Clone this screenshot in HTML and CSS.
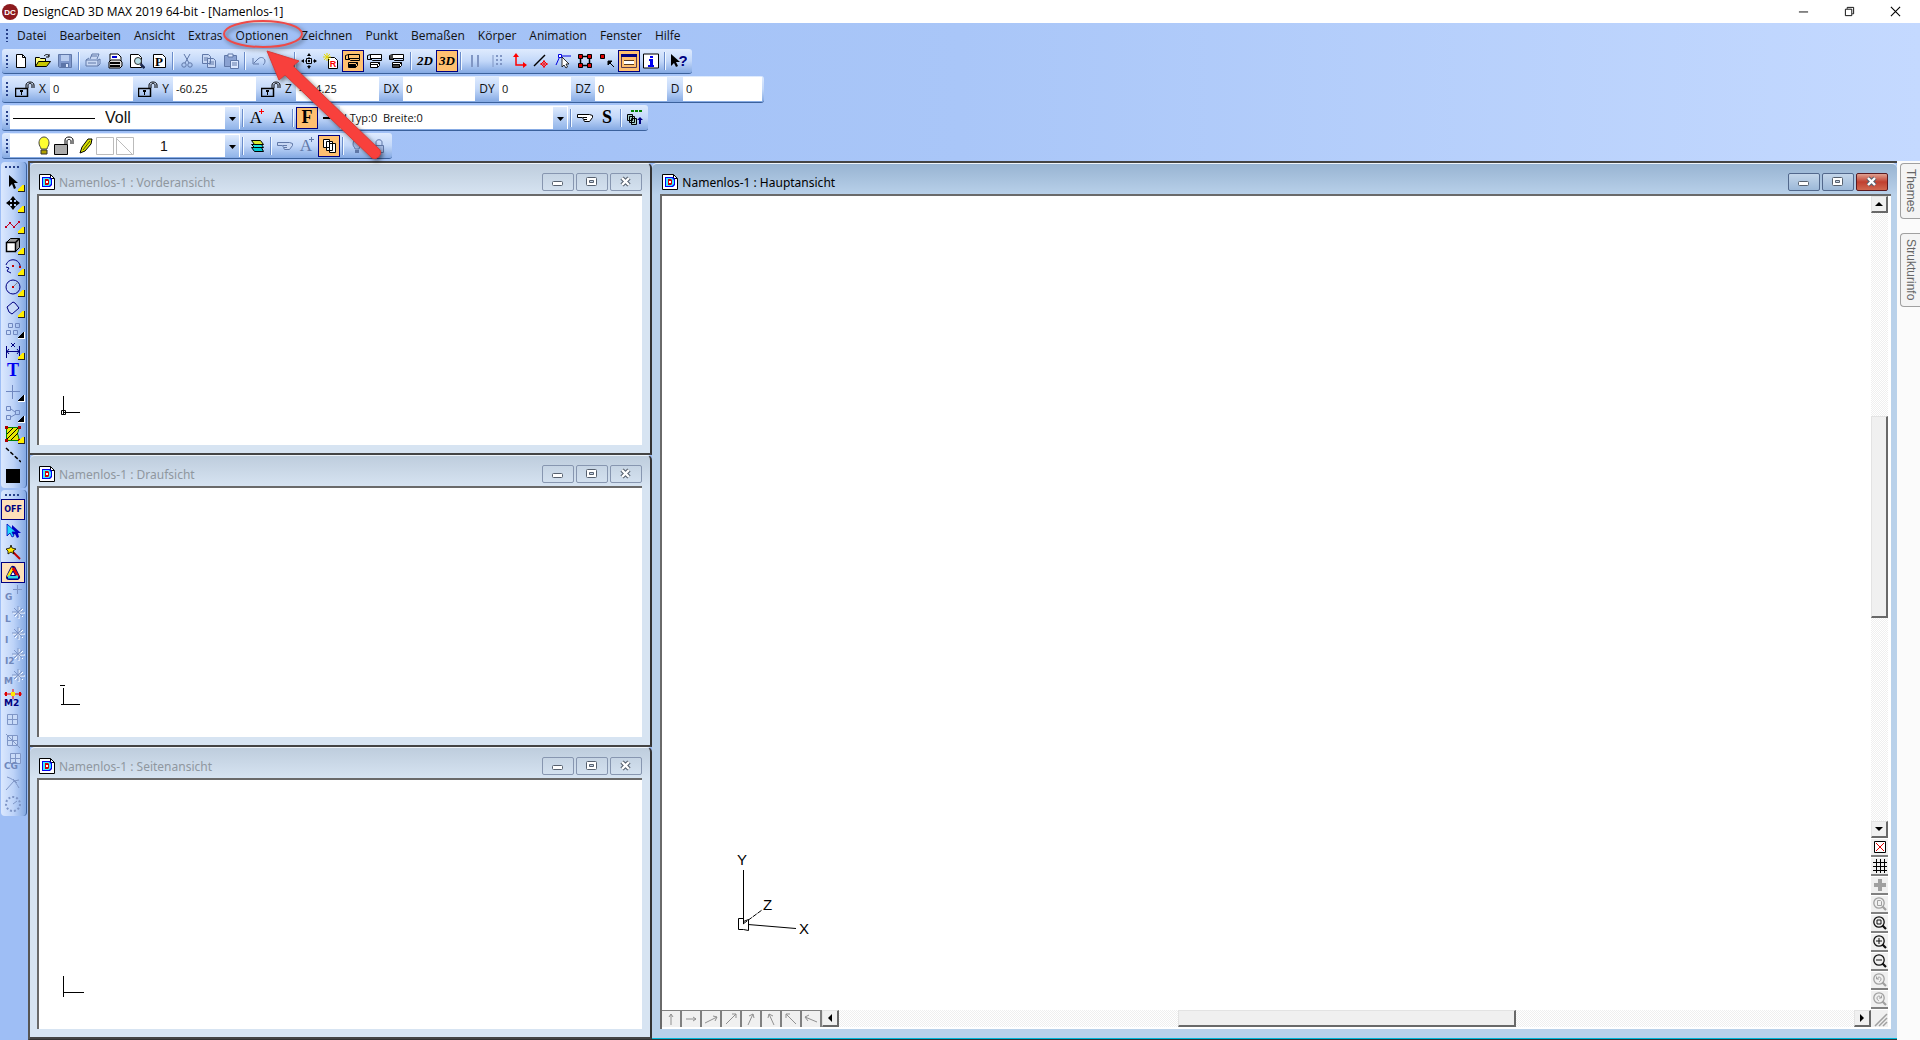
FILE: index.html
```html
<!DOCTYPE html>
<html lang="de">
<head>
<meta charset="utf-8">
<title>DesignCAD 3D MAX 2019 64-bit - [Namenlos-1]</title>
<link rel="stylesheet" href="styles.css">
</head>
<body>
<svg class="defs" aria-hidden="true">
  <symbol id="i-doc" viewBox="0 0 16 16"><path d="M.5.5h11l4 4v11H.5z" fill="#fff" stroke="#000"/><path d="M11.500 .5v4h4" fill="none" stroke="#000"/><path d="M3 3h8l2 2v6l-2 2H3z" fill="#0000f0"/><path d="M4 4h6l2 2v4l-2 2H4z" fill="#40e8ff"/><path d="M6 5h3l1 1v4l-1 1H6z" fill="#d00000"/><path d="M7 7h2v2H7z" fill="#fff"/></symbol>
  <symbol id="i-min" viewBox="0 0 12 12"><rect x=".5" y="5.500" width="10" height="4" rx="1" fill="#fff" stroke="#56606e"/></symbol>
  <symbol id="i-max" viewBox="0 0 12 12"><rect x=".5" y="1.500" width="10" height="8" rx="1" fill="#fff" stroke="#56606e"/><path d="M3.500 4.500h4v2h-4z" fill="#c4d2e4" stroke="#56606e"/></symbol>
  <symbol id="i-x" viewBox="0 0 12 12"><path d="M2 2l7 7M9 2L2 9" stroke="#56606e" stroke-width="4.500"/><path d="M2 2l7 7M9 2L2 9" stroke="#fff" stroke-width="2.400"/></symbol>
  <symbol id="i-lock" viewBox="0 0 20 16"><path d="M.5 7.500h12v8H.5z" fill="none" stroke="#000" stroke-width="1.500"/><path d="M11 7V4c0-4 8-4 8 0v3M13 7V4c0-2 4-2 4 0v3" fill="none" stroke="#000"/><path d="M5 9h3v2H7v3H6v-3H5z"/></symbol>
  <symbol id="i-plot" viewBox="0 0 16 16"><path d="M3.500 1.500h11v4h-11z" fill="none" stroke="#000"/><path d="M.5 2.500l3-1v4l2 2h9v-2M.5 2.500v4h4" fill="none" stroke="#000"/><path d="M3.500 9.500h9v3l-2 2h-7zM3.500 11.500h7l2-2M10.500 11.500v3" fill="none" stroke="#000"/></symbol>
  <symbol id="i-ray" viewBox="0 0 24 20"><path d="M17 1v12M11 7h12M13 3l8 8M21 3l-8 8" stroke="#fff" transform="translate(1 1)"/><path d="M17 1v12M11 7h12M13 3l8 8M21 3l-8 8" stroke="#7f96c6"/></symbol>
  <symbol id="i-mag" viewBox="0 0 14 14"><circle cx="6" cy="6" r="5.200" fill="none" stroke="currentColor" stroke-width="1.300"/><path d="M9.500 9.500l3.500 3.500" stroke="currentColor" stroke-width="2.200"/></symbol>
</svg>

<header class="titlebar">
  <svg class="logo" viewBox="0 0 16 16" aria-hidden="true"><circle cx="8" cy="8" r="8" fill="#8d1a1e"/><text x="8" y="11" text-anchor="middle" class="logo-text">DC</text></svg>
  <h1>DesignCAD 3D MAX 2019 64-bit - [Namenlos-1]</h1>
  <div class="winctl">
    <button aria-label="Minimieren"><svg viewBox="0 0 12 12"><path d="M1 6.500h10" stroke="#000"/></svg></button>
    <button aria-label="Wiederherstellen"><svg viewBox="0 0 12 12"><path d="M1.500 3.500h7v7h-7zM3.500 3V1.500h7v7H9" fill="none" stroke="#000"/></svg></button>
    <button aria-label="Schließen"><svg viewBox="0 0 12 12"><path d="M1 1l10 10M11 1L1 11" stroke="#000" stroke-width="1.200"/></svg></button>
  </div>
</header>

<div class="bars">
  <nav class="menu grip">
    <button>Datei</button><button>Bearbeiten</button><button>Ansicht</button><button>Extras</button><button>Optionen</button><button>Zeichnen</button><button>Punkt</button><button>Bemaßen</button><button>Körper</button><button>Animation</button><button>Fenster</button><button>Hilfe</button>
  </nav>

  <div class="bar grip">
    <button class="tb" aria-label="Neu"><svg viewBox="0 0 16 16"><path d="M3.500 1.500h6l3 3v10h-9z" fill="#fff" stroke="#000"/><path d="M9.500 1.500v3h3" fill="none" stroke="#000"/></svg></button>
    <button class="tb" aria-label="Öffnen"><svg viewBox="0 0 16 16"><path d="M.5 13.500v-9h4l1 1h5v3" fill="#ffff80" stroke="#000"/><path d="M.5 13.500l3-5h12l-4 5z" fill="#c8c800" stroke="#000"/><path d="M9 3c2-2 4-2 5 0m0-2v3h-3" fill="none" stroke="#000"/></svg></button>
    <button class="tb" aria-label="Speichern"><svg viewBox="0 0 16 16"><path d="M1.500 1.500h13v13h-12l-1-1z" fill="#8099cc" stroke="#6078a8"/><path d="M4 2h8v6H4z" fill="#b9cdf0"/><path d="M4 10h8v4H4z" fill="#5c75a8"/><path d="M9 11h2v3H9z" fill="#dce8ff"/></svg></button>
    <i class="sep"></i>
    <button class="tb" aria-label="Drucken"><svg viewBox="0 0 16 16"><path d="M5 6l2-5h7l-2 5M1 7h12v6H1zM1 7l3-2M13 7l2-1v5l-2 2M3 10h8M6 3h6" fill="#c8d8f4" stroke="#6078a8"/></svg></button>
    <button class="tb" aria-label="Druckoptionen"><svg viewBox="0 0 16 16"><path d="M3 1h8l3 3v10H3z" fill="#fff" stroke="#000"/><path d="M5 4h5" stroke="#0000d0" stroke-width="2"/><path d="M4 7h9l2 2v4l-2 2H2V9z" fill="#ddd" stroke="#000"/><path d="M3 10h10M3 13h10" stroke="#000" stroke-width="2"/></svg></button>
    <button class="tb" aria-label="Seitenansicht"><svg viewBox="0 0 16 16"><path d="M1.500 1.500h8l3 3v10h-11z" fill="#fff" stroke="#000"/><circle cx="9" cy="8" r="3.500" fill="#b8e0e8" stroke="#333"/><path d="M11.500 11l4 4" stroke="#1d2a50" stroke-width="2.500"/></svg></button>
    <button class="tb" aria-label="Plotten"><svg viewBox="0 0 16 16"><path d="M2.500 1.500h9l3 3v10h-12z" fill="#fff" stroke="#000"/><text x="8" y="13" text-anchor="middle" class="t-serif">P</text></svg></button>
    <i class="sep"></i>
    <button class="tb" aria-label="Ausschneiden"><svg viewBox="0 0 16 16"><path d="M5 1l5 9M11 1L6 10" stroke="#6078a8" fill="none"/><circle cx="5" cy="12" r="2.200" fill="none" stroke="#6078a8"/><circle cx="11" cy="12" r="2.200" fill="none" stroke="#6078a8"/></svg></button>
    <button class="tb" aria-label="Kopieren"><svg viewBox="0 0 16 16"><path d="M1.500 1.500h6l2 2v7h-8zM6.500 5.500h6l2 2v7h-8zM3 5h4M3 7h3M8 9h5M8 11h5" fill="#c8d8f4" stroke="#6078a8"/></svg></button>
    <button class="tb" aria-label="Einfügen"><svg viewBox="0 0 16 16"><path d="M1.500 2.500h12v11h-12z" fill="#8aa2d2" stroke="#6078a8"/><path d="M5 1h5v3H5z" fill="#dce8ff" stroke="#6078a8"/><path d="M7.500 7.500h8v8h-8zM9 10h5M9 12h5" fill="#dce8ff" stroke="#6078a8"/></svg></button>
    <i class="sep"></i>
    <button class="tb" aria-label="Rückgängig"><svg viewBox="0 0 16 16"><path d="M2 5v6h6M3 10l4-4c3-3 7-1 7 2 0 2-1 3-2 4" fill="none" stroke="#6078a8"/></svg></button>
    <button class="tb" aria-label="Wiederholen"><svg viewBox="0 0 16 16"><path d="M14 5v6H8M13 10L9 6C6 3 2 5 2 8c0 2 1 3 2 4" fill="none" stroke="#6078a8"/></svg></button>
    <i class="sep"></i>
    <button class="tb" aria-label="Schwenken"><svg viewBox="0 0 16 16"><path d="M8 0l2 3H6zM8 16l2-3H6zM0 8l3-2v4zM16 8l-3-2v4z"/><path d="M8 2v12M2 8h12" stroke="#000" stroke-dasharray="1 1"/><path d="M5.500 5.500h5v5h-5z" fill="#cfe0fc" stroke="#000"/><circle cx="8" cy="8" r="1.200"/></svg></button>
    <button class="tb" aria-label="Regenerieren"><svg viewBox="0 0 16 16"><path d="M5.500 4.500h6l3 3v8h-9z" fill="#fff" stroke="#000"/><path d="M4 0v8M0 4h8M1 1l6 6M7 1L1 7" stroke="#e8d800"/><text x="10" y="14" text-anchor="middle" class="t-red">R</text></svg></button>
    <button class="tb on" aria-label="Ansicht 1"><svg viewBox="0 0 16 16"><path d="M3 12h8v2H3z"/><use href="#i-plot"/></svg></button>
    <button class="tb" aria-label="Ansicht 2"><svg viewBox="0 0 16 16"><path d="M3 1h11v5H3zM3 9h9v5H3z" fill="#fff"/><use href="#i-plot"/></svg></button>
    <button class="tb" aria-label="Ansicht 3"><svg viewBox="0 0 16 16"><path d="M3 1h11v5H3zM3 9h9v5H3z" fill="#fff"/><use href="#i-plot"/><path d="M1 2h3v4H1zM4 12h6v2H4z" fill="#444"/></svg></button>
    <i class="sep"></i>
    <button class="tb dim">2D</button>
    <button class="tb dim on">3D</button>
    <i class="sep"></i>
    <button class="tb" aria-label="Parallel"><svg viewBox="0 0 16 16"><path d="M5 2v12M11 2v12" stroke="#8096c4" stroke-width="2"/></svg></button>
    <button class="tb" aria-label="Raster"><svg viewBox="0 0 16 16"><path d="M4 2v12" stroke="#8096c4"/><path d="M8 2v12M12 2v12" stroke="#8096c4" stroke-width="2" stroke-dasharray="2 2"/></svg></button>
    <button class="tb" aria-label="Koordinaten"><svg viewBox="0 0 16 16"><path d="M5 3v9h9" fill="none" stroke="#f00" stroke-width="1.500"/><path d="M5 0l3 4H2zM16 12l-4-3v6z" fill="#f00"/></svg></button>
    <button class="tb" aria-label="Linienfang"><svg viewBox="0 0 16 16"><path d="M1 13L12 2" stroke="#000" stroke-width="1.500"/><path d="M11 7v8M7 11h8" stroke="#f00"/><path d="M11 8l3 3-3 3-3-3z" fill="none" stroke="#f00"/></svg></button>
    <button class="tb" aria-label="Auswahl"><svg viewBox="0 0 16 16"><path d="M1 12L5 3h11" fill="none" stroke="#0000e0"/><path d="M3.500 1.500h3v3h-3z" fill="#fff" stroke="#0000e0"/><path d="M7 4v10l2-2 2 3 1.500-1-1.500-3h3z" fill="#fff" stroke="#000" stroke-width=".8"/></svg></button>
    <button class="tb" aria-label="Griffe"><svg viewBox="0 0 16 16"><path d="M3.500 3.500h9v9h-9z" fill="none" stroke="#000" stroke-width="1.500"/><path d="M1.500 1.500h4v4h-4zM10.500 1.500h4v4h-4zM1.500 10.500h4v4h-4zM10.500 10.500h4v4h-4z" fill="#e00000" stroke="#000"/></svg></button>
    <button class="tb" aria-label="Punkt wählen"><svg viewBox="0 0 16 16"><path d="M1.500 1.500h4v4h-4z" fill="#e00000" stroke="#000"/><path d="M9 8h4l-4 4zM10 9l5 5" stroke="#000"/></svg></button>
    <button class="tb on" aria-label="Infofeld"><svg viewBox="0 0 16 16"><path d="M.5 1.500h15v13H.5z" fill="#ffc070" stroke="#5a3a50"/><path d="M0 1h16v3H0z" fill="#000080"/><path d="M3 7.500h10v4H3z" fill="#fff"/><path d="M3 7.500h10M3 11.500h10" stroke="#5a3a20"/></svg></button>
    <button class="tb" aria-label="Info"><svg viewBox="0 0 16 16"><path d="M.5 1h15v14H.5z" fill="#fff" stroke="#000"/><path d="M7 3h3v2H7zM6 6h4v6h1v2H5v-2h2V8H6z" fill="#0000f0"/></svg></button>
    <i class="sep"></i>
    <button class="tb" aria-label="Kontexthilfe"><svg viewBox="0 0 16 16"><path d="M0 1v12l3-3 2 4 2-1-2-4h4z"/><text x="12" y="13" text-anchor="middle" class="t-help">?</text></svg></button>
  </div>

  <form class="bar coords grip">
    <button type="button" class="lock" aria-label="X sperren"><svg><use href="#i-lock"/></svg></button><label for="cx">X</label><input id="cx" class="wide" value="0">
    <button type="button" class="lock" aria-label="Y sperren"><svg><use href="#i-lock"/></svg></button><label for="cy">Y</label><input id="cy" class="wide" value="-60.25">
    <button type="button" class="lock" aria-label="Z sperren"><svg><use href="#i-lock"/></svg></button><label for="cz">Z</label><input id="cz" class="wide" value="-114.25">
    <label class="d" for="dx">DX</label><input id="dx" value="0">
    <label class="d" for="dy">DY</label><input id="dy" value="0">
    <label class="d" for="dz">DZ</label><input id="dz" value="0">
    <label class="d1" for="dd">D</label><input id="dd" class="last" value="0">
  </form>

  <div class="bar tall grip">
    <div class="combo style">
      <svg class="line" viewBox="0 0 82 2" aria-hidden="true"><path d="M0 1.500h82" stroke="#000"/></svg>
      <select aria-label="Linienart"><option>Voll</option></select><svg class="drop" viewBox="0 0 14 22" aria-hidden="true"><path d="M4 10h7l-3.500 4z"/></svg>
    </div>
    <i class="sep"></i>
    <button class="tb" aria-label="Textstil neu"><svg class="big" viewBox="0 0 20 20"><text x="9" y="15" text-anchor="middle" class="t-a">A</text><path d="M14.500 1v5M12 3.500h5" stroke="#f00"/></svg></button>
    <button class="tb" aria-label="Textstil"><svg class="big" viewBox="0 0 20 20"><text x="10" y="15" text-anchor="middle" class="t-a">A</text></svg></button>
    <i class="sep"></i>
    <button class="tb on bold">F</button>
    <button class="tb" aria-label="Linie"><svg viewBox="0 0 16 16"><path d="M2 8h12" stroke="#000" stroke-width="2"/></svg></button>
    <div class="combo type">
      <select aria-label="Linientyp"><option>LTyp:0&nbsp; Breite:0</option></select><svg class="drop" viewBox="0 0 14 22" aria-hidden="true"><path d="M4 10h7l-3.500 4z"/></svg>
    </div>
    <i class="sep"></i>
    <button class="tb" aria-label="Übernehmen"><svg viewBox="0 0 16 16"><path d="M.5 4.500h12l3 1v2l-3 4H7.500l-1-2-1-2h-5z" fill="#fff" stroke="#000"/><path d="M6 7.500h4M7 9.500h3" stroke="#000"/></svg></button>
    <button class="tb bold">S</button>
    <i class="sep"></i>
    <button class="tb" aria-label="Gruppe"><svg viewBox="0 0 16 16"><path d="M4 1h12" stroke="#008000" stroke-width="2" stroke-dasharray="3 1"/><path d="M.5 4.500h5v6h-5zM2.500 6.500h5v6h-5zM4.500 8.500h5v6h-5z" fill="#a8d0c8" stroke="#000"/><path d="M13 7l3 3h-2v4h-2v-4h-2z" fill="#000080"/></svg></button>
  </div>

  <div class="bar tall grip">
    <div class="combo layer">
      <svg class="states" viewBox="0 0 98 20" aria-hidden="true">
        <path d="M3 7c0-8 10-8 10 0 0 3-2 4-2 6H5c0-2-2-3-2-6z" fill="#ffff30" stroke="#444"/><path d="M5 14h6v4H5z" fill="#b0a000" stroke="#333"/>
        <path d="M18.500 8.500h13v10h-13z" fill="#aaa" stroke="#000"/><path d="M29 8V4c0-4 8-4 8 0v4M31 8V5c0-2 4-2 4 0v3" fill="none" stroke="#000"/>
        <path d="M44 17l2-6 6-8h4l-1 5-6 7z" fill="#d8e000" stroke="#000"/><path d="M47 14l7-9" stroke="#505000"/>
        <path d="M60.500 1.500h17v17h-17zM80.500 1.500h17v17h-17zM81 3l15 15" fill="none" stroke="#bbb"/>
      </svg>
      <select aria-label="Ebene"><option>1</option></select><svg class="drop" viewBox="0 0 14 22" aria-hidden="true"><path d="M4 10h7l-3.500 4z"/></svg>
    </div>
    <i class="sep"></i>
    <button class="tb" aria-label="Ebenen"><svg viewBox="0 0 16 16"><path d="M2.500 9.500h10l2 4h-9z" fill="#00c8d0" stroke="#000"/><path d="M2.500 6.500h10l2 3h-9z" fill="#20e0e0" stroke="#000"/><path d="M2.500 2.500h9l3 4h-9z" fill="#d8e830" stroke="#000"/></svg></button>
    <i class="sep"></i>
    <button class="tb" aria-label="Ebene übernehmen"><svg viewBox="0 0 16 16"><path d="M.5 4.500h12l3 1v2l-3 4H7.500l-1-2-1-2h-5z" fill="#c8d8f4" stroke="#6078a8"/><path d="M6 7.500h4M7 9.500h3" stroke="#6078a8"/></svg></button>
    <button class="tb faint" aria-label="Textebene"><svg class="big" viewBox="0 0 20 20"><text x="9" y="15" text-anchor="middle" class="t-a">A</text><path d="M14.500 1v5M12 3.500h5" stroke="#6078a8"/></svg></button>
    <button class="tb on" aria-label="Alle Ebenen"><svg viewBox="0 0 16 16"><path d="M2.500 1.500h6v8h-6zM5.500 3.500h6v9h-6zM8.500 5.500h6v9h-6z" fill="#fff" stroke="#000"/></svg></button>
    <i class="sep"></i>
    <button class="tb" aria-label="Sichtbar"><svg viewBox="0 0 16 16"><path d="M4 6c0-6 8-6 8 0 0 3-2 3-2 5H6c0-2-2-2-2-5z" fill="#a9bde6" stroke="#6078a8"/><path d="M6 12h4v3H6z" fill="#6078a8"/></svg></button>
    <button class="tb" aria-label="Gesperrt"><svg viewBox="0 0 16 16"><path d="M3.500 7.500h9v7h-9z" fill="#a9bde6" stroke="#6078a8"/><path d="M5 7V4c0-3 6-3 6 0v3" fill="none" stroke="#6078a8"/></svg></button>
  </div>
</div>

<div class="work">
  <aside class="tools">
    <div class="dock">
      <button class="more" aria-label="Auswählen"><svg viewBox="0 0 16 16"><path d="M4 1v12l3-3 2 5 2-1-2-5h4z"/></svg></button>
      <button class="more" aria-label="Verschieben"><svg viewBox="0 0 16 16"><path d="M8 1l3 4H5zM8 15l3-4H5zM1 8l4-3v6zM15 8l-4-3v6z"/><path d="M8 3v10M3 8h10" stroke="#000" stroke-width="2"/></svg></button>
      <button class="more" aria-label="Linie"><svg viewBox="0 0 16 16"><path d="M1 11l4-4 4 4 5-5" fill="none" stroke="#c00020"/><path d="M0 10h2v2H0zM4 6h2v2H4zM8 10h2v2H8zM13 5h2v2h-2z" fill="#c00020"/></svg></button>
      <button class="more" aria-label="Quader"><svg viewBox="0 0 16 16"><path d="M1.500 5.500l4-4h9v9l-4 4" fill="#999" stroke="#000"/><path d="M10.500 5.500l4-4M1.500 5.500h9v9h-9z" fill="#fff" stroke="#000" stroke-width="1.500"/></svg></button>
      <button class="more" aria-label="Bogen"><svg viewBox="0 0 16 16"><path d="M1 7c2-7 12-7 14 0v3M1 9l3 1-2 3 4 2" fill="none" stroke="#000080"/><path d="M7 7h2v2H7zM14 8h2v2h-2z" fill="#c00000"/></svg></button>
      <button class="more" aria-label="Kreis"><svg viewBox="0 0 16 16"><circle cx="8" cy="8" r="7" fill="none" stroke="#000080"/><path d="M8 8l5-5" stroke="#888"/><path d="M7 7h2v2H7z" fill="#c00000"/></svg></button>
      <button class="more" aria-label="Fläche"><svg viewBox="0 0 16 16"><path d="M2 7l6-5 2 1 4 5-7 6-3-2z" fill="#c9dbf8" stroke="#000080"/></svg></button>
      <button class="more off" aria-label="Anordnung"><svg viewBox="0 0 16 16"><path d="M3.500 2.500h4v4h-4zM10.500 2.500h4v4h-4zM1.500 9.500h4v4h-4zM8.500 9.500h4v4h-4z" fill="none" stroke="#7088c0"/></svg></button>
      <button class="more" aria-label="Bemaßung"><svg viewBox="0 0 16 16"><path d="M1.500 4v12M14.500 4v12M1 9.500h14M4 7L2 9.500l2 2.500M12 7l2 2.500-2 2.500M6 1l4 4M10 1L6 5" fill="none" stroke="#000080"/></svg></button>
      <button class="text-tool">T</button>
      <button class="more off" aria-label="Punkt"><svg viewBox="0 0 16 16"><path d="M7.500 1v14M1 7.500h14" stroke="#7088c0"/></svg></button>
      <button class="more off" aria-label="Struktur"><svg viewBox="0 0 16 16"><path d="M1.500 1.500h4v4h-4zM1.500 10.500h4v4h-4zM10.500 5.500h4v4h-4zM6 4l4 3M6 12l5-3" fill="none" stroke="#7088c0"/></svg></button>
      <button class="more" aria-label="Schraffur"><svg viewBox="0 0 16 16"><path d="M1.500 1.500h13l-2 6 2 7h-13z" fill="#e8e800" stroke="#008000"/><path d="M2 8l6-6M2 13L13 2M6 14l7-7" stroke="#000"/><path d="M0 0h3v3H0zM13 0h3v3h-3zM0 13h3v3H0zM13 13h3v3h-3z" fill="#b00000"/></svg></button>
      <button aria-label="Strichlinie"><svg viewBox="0 0 16 16"><path d="M1 1l15 14" stroke="#000" stroke-width="1.500" stroke-dasharray="4 2"/></svg></button>
      <button aria-label="Farbe"><svg viewBox="0 0 16 16"><path d="M1 1h14v14H1z"/></svg></button>
    </div>
    <div class="dock">
      <button class="on off-label">OFF</button>
      <button aria-label="Zeiger"><svg viewBox="0 0 16 16"><path d="M7 2v11l3-2 2 4 2-1-1-4h3z" fill="#0000c0"/><path d="M2 1v12l3-3 2 4 2-1-2-4h4z" fill="#20d8f8" stroke="#0000c0" stroke-width=".8"/></svg></button>
      <button aria-label="Zauberstab"><svg viewBox="0 0 16 16"><path d="M7 7l8 8" stroke="#c00000" stroke-width="2"/><path d="M6 1l1 3 4 1-3 2 1 3-3-2-3 2V7L1 5l4-1z" fill="#ffe800" stroke="#000" stroke-width=".8"/></svg></button>
      <button class="on" aria-label="Dreieck"><svg viewBox="0 0 16 16"><path d="M8 4l4 8H4z" fill="none" stroke="#000080" stroke-width="6" stroke-linejoin="round"/><path d="M8 3l-5 9" stroke="#ffe800" stroke-width="3"/><path d="M8 3l5 9" stroke="#e00000" stroke-width="3"/><path d="M3 12h10" stroke="#30d8e8" stroke-width="3"/><path d="M8 6l2.500 4.500h-5z" fill="#fff" stroke="#000080"/></svg></button>
      <button class="snap" aria-label="Fang G"><svg viewBox="0 0 24 20"><path d="M16.500 1v9M12 5.500h9" stroke="#7f96c6"/><text x="4" y="16">G</text></svg></button>
      <button class="snap" aria-label="Fang L"><svg viewBox="0 0 24 20"><use href="#i-ray"/><text x="4" y="17">L</text></svg></button>
      <button class="snap" aria-label="Fang I"><svg viewBox="0 0 24 20"><use href="#i-ray"/><text x="4" y="17">I</text></svg></button>
      <button class="snap" aria-label="Fang I2"><svg viewBox="0 0 24 20"><use href="#i-ray"/><text x="4" y="17">I2</text></svg></button>
      <button class="snap" aria-label="Fang M"><svg viewBox="0 0 24 20"><use href="#i-ray"/><text x="3" y="16">M</text></svg></button>
      <button class="snap live" aria-label="Fang M2"><svg viewBox="0 0 24 20"><path d="M3 5h18" stroke="#e00000"/><path d="M12 0v10" stroke="#e00000"/><path d="M10 3h4v4h-4z" fill="#ffe800"/><path d="M4 3h2v4H4zM18 3h2v4h-2z" fill="#e00000"/><text x="3" y="17">M2</text></svg></button>
      <button aria-label="Flächenfang"><svg viewBox="0 0 16 16"><path d="M2.500 2.500h10v10h-10zM7.500 2v11M2 7.500h11" fill="#c9dbf8" stroke="#7f96c6"/></svg></button>
      <button aria-label="Flächenfang 2"><svg viewBox="0 0 16 16"><path d="M2.500 2.500h10v10h-10zM7.500 2v11M2 7.500h11M1 1l14 14" fill="#c9dbf8" stroke="#7f96c6"/></svg></button>
      <button class="snap" aria-label="Fang CG"><svg viewBox="0 0 24 20"><path d="M9.500 1.500h10v10h-10zM14.500 1v11M9 6.500h11" fill="#c9dbf8" stroke="#7f96c6"/><text x="3" y="17">CG</text></svg></button>
      <button aria-label="Kurvenfang"><svg viewBox="0 0 16 16"><path d="M2 2c6 2 8 4 12 11M1 15l8-9 5-1M8 4l4 4" fill="none" stroke="#7f96c6"/></svg></button>
      <button aria-label="Kreisfang"><svg viewBox="0 0 16 16"><circle cx="8" cy="8" r="7" fill="none" stroke="#7f96c6" stroke-width="2" stroke-dasharray="2 2"/><path d="M8 8l4-3" stroke="#7f96c6"/></svg></button>
    </div>
  </aside>

  <main class="mdi">
    <section class="child front">
      <header><svg class="doc"><use href="#i-doc"/></svg><h2>Namenlos-1 : Vorderansicht</h2><div class="ctl"><button aria-label="Minimieren"><svg><use href="#i-min"/></svg></button><button aria-label="Maximieren"><svg><use href="#i-max"/></svg></button><button aria-label="Schließen"><svg><use href="#i-x"/></svg></button></div></header>
      <div class="view"><svg class="axis" viewBox="0 0 30 30" aria-hidden="true"><path d="M5.500 6v18M5 22.500h17M3.500 20.500h4v4h-4z" fill="none" stroke="#000"/></svg></div>
    </section>
    <section class="child top">
      <header><svg class="doc"><use href="#i-doc"/></svg><h2>Namenlos-1 : Draufsicht</h2><div class="ctl"><button aria-label="Minimieren"><svg><use href="#i-min"/></svg></button><button aria-label="Maximieren"><svg><use href="#i-max"/></svg></button><button aria-label="Schließen"><svg><use href="#i-x"/></svg></button></div></header>
      <div class="view"><svg class="axis" viewBox="0 0 30 30" aria-hidden="true"><path d="M5.500 6v17M3 22.500h19M2 3.500h5" fill="none" stroke="#000"/></svg></div>
    </section>
    <section class="child side">
      <header><svg class="doc"><use href="#i-doc"/></svg><h2>Namenlos-1 : Seitenansicht</h2><div class="ctl"><button aria-label="Minimieren"><svg><use href="#i-min"/></svg></button><button aria-label="Maximieren"><svg><use href="#i-max"/></svg></button><button aria-label="Schließen"><svg><use href="#i-x"/></svg></button></div></header>
      <div class="view"><svg class="axis" viewBox="0 0 30 30" aria-hidden="true"><path d="M5.500 4v21M5 20.500h21" fill="none" stroke="#000"/></svg></div>
    </section>
    <section class="child active">
      <header><svg class="doc"><use href="#i-doc"/></svg><h2>Namenlos-1 : Hauptansicht</h2><div class="ctl"><button aria-label="Minimieren"><svg><use href="#i-min"/></svg></button><button aria-label="Maximieren"><svg><use href="#i-max"/></svg></button><button class="close" aria-label="Schließen"><svg><use href="#i-x"/></svg></button></div></header>
      <div class="view split">
        <div class="canvas"><svg class="axis3" viewBox="0 0 90 90" aria-hidden="true"><path d="M12.500 20v54M17 74.500l48 4" fill="none" stroke="#000"/><path d="M12 74l19-14" stroke="#000" stroke-dasharray="5 1"/><path d="M7.500 68.500h5v3l5-2v11l-5-1h-5z" fill="none" stroke="#000"/><text x="6" y="15">Y</text><text x="32" y="60">Z</text><text x="68" y="84">X</text></svg></div>
        <div class="vscroll">
          <button class="edge" aria-label="Nach oben"><svg viewBox="0 0 8 8"><path d="M0 6h8L4 2z"/></svg></button>
          <div class="track"><div class="thumb"></div></div>
          <button class="edge" aria-label="Nach unten"><svg viewBox="0 0 8 8"><path d="M0 2h8L4 6z"/></svg></button>
          <button aria-label="Löschen"><svg viewBox="0 0 14 14"><path d="M1.500 1.500h11v11h-11z" fill="#fff" stroke="#000"/><path d="M3 3l8 8M11 3l-8 8" stroke="#e00000"/></svg></button>
          <button aria-label="Raster"><svg viewBox="0 0 14 14"><path d="M3.500 0v14M7.500 0v14M11.500 0v14M0 3.500h14M0 7.500h14M0 11.500h14" stroke="#000"/></svg></button>
          <button aria-label="Fadenkreuz"><svg viewBox="0 0 14 14"><path d="M5 1h4v4h4v4H9v4H5V9H1V5h4z" fill="#a0a0a0"/></svg></button>
          <button class="gray" aria-label="Seite zoomen"><svg viewBox="0 0 14 14"><use href="#i-mag"/><path d="M4.500 3.500h3l1 1v4h-4z" fill="none" stroke="currentColor"/></svg></button>
          <button aria-label="Fenster zoomen"><svg viewBox="0 0 14 14"><use href="#i-mag"/><path d="M4 4h4v4H4z" fill="none" stroke="currentColor"/></svg></button>
          <button aria-label="Vergrößern"><svg viewBox="0 0 14 14"><use href="#i-mag"/><path d="M6 3v6M3 6h6" stroke="currentColor"/></svg></button>
          <button aria-label="Verkleinern"><svg viewBox="0 0 14 14"><use href="#i-mag"/><path d="M3 6h6" stroke="currentColor"/></svg></button>
          <button class="gray" aria-label="Zoom zurück"><svg viewBox="0 0 14 14"><use href="#i-mag"/><path d="M3.500 3.500v2.500h2.500M4 6c1-3 4-2 4 0s-1 2-2 3" fill="none" stroke="currentColor"/></svg></button>
          <button class="gray" aria-label="Zoom vor"><svg viewBox="0 0 14 14"><use href="#i-mag"/><path d="M8.500 3.500v2.500H6M8 6c-1-3-4-2-4 0s1 2 2 3" fill="none" stroke="currentColor"/></svg></button>
        </div>
        <div class="hscroll">
          <button aria-label="Ansicht oben"><svg viewBox="0 0 14 14"><path d="M7 13V2M5 5l2-3 2 3" /></svg></button>
          <button aria-label="Ansicht rechts"><svg viewBox="0 0 14 14"><path d="M2 7h10M9 5l3 2-3 2"/></svg></button>
          <button aria-label="Drehen 1"><svg viewBox="0 0 14 14"><path d="M1 11l12-6M9 4l4 1-2 4"/></svg></button>
          <button aria-label="Drehen 2"><svg viewBox="0 0 14 14"><path d="M2 12L12 2M8 2h4v4"/></svg></button>
          <button aria-label="Drehen 3"><svg viewBox="0 0 14 14"><path d="M4 13L9 2M5 4l4-2 1 4"/></svg></button>
          <button aria-label="Drehen 4"><svg viewBox="0 0 14 14"><path d="M10 13L5 2M9 4L5 2 4 6"/></svg></button>
          <button aria-label="Drehen 5"><svg viewBox="0 0 14 14"><path d="M12 12L2 2M6 2H2v4"/></svg></button>
          <button aria-label="Drehen 6"><svg viewBox="0 0 14 14"><path d="M13 10L1 5M5 3L1 5l3 4"/></svg></button>
          <button class="edge" aria-label="Nach links"><svg viewBox="0 0 8 8"><path d="M6 0v8L2 4z"/></svg></button>
          <div class="track"><div class="thumb"></div></div>
          <button class="edge" aria-label="Nach rechts"><svg viewBox="0 0 8 8"><path d="M2 0v8l4-4z"/></svg></button>
        </div>
        <svg class="sizer" viewBox="0 0 17 17" aria-hidden="true"><path d="M4 16L16 4M8 16l8-8M12 16l4-4" stroke="#a0a0a0" stroke-width="1.500"/></svg>
      </div>
    </section>
  </main>

  <aside class="tabs"><button>Themes</button><button>Strukturinfo</button></aside>
</div>

<svg class="callout" viewBox="0 0 180 160" aria-hidden="true">
  <g class="shade"><ellipse cx="43" cy="20" rx="39" ry="13" fill="none" stroke="#ee4a48" stroke-width="2"/><path d="M47 37l32 10-6 5 87 84a6 6 0 0 1-8 8L65 61l-6 5z" fill="#f8403c" stroke="#dc3836"/></g>
</svg>
</body>
</html>
```

FILE: styles.css
```css
* { box-sizing: border-box; }

body {
  margin: 0;
  height: 100vh;
  display: flex;
  flex-direction: column;
  overflow: hidden;
  background: #fbfbfb;
  color: #111;
  font: 12px/16px "Open Sans", "Noto Sans", sans-serif;
}

h1, h2 { margin: 0; font: inherit; white-space: nowrap; }

button {
  margin: 0;
  padding: 0;
  border: 0;
  background: none;
  color: inherit;
  font: inherit;
  display: flex;
  align-items: center;
  justify-content: center;
  flex: none;
}

svg { display: block; flex: none; }
.defs { position: absolute; width: 0; height: 0; }

/* Title bar */
.titlebar {
  height: 23px;
  flex: none;
  display: flex;
  align-items: center;
  padding: 0 2px;
  background: #fff;
  color: #000;
}
.titlebar h1 { flex: 1; padding-left: 5px; }
.logo { width: 16px; height: 16px; }
.logo-text { font: bold 8px "Liberation Sans", sans-serif; fill: #fff; }
.winctl { display: flex; }
.winctl button { width: 46px; height: 20px; }
.winctl svg { width: 11px; height: 11px; }

/* Menu and toolbars */
.bars {
  flex: none;
  padding-bottom: 2px;
  display: flex;
  flex-direction: column;
  align-items: flex-start;
  gap: 2px;
  background: linear-gradient(90deg, #9ebef5, #a9c6f8 50%, #c4d9ff);
}
.grip { position: relative; padding-left: 10px; }
.grip::before {
  content: "";
  position: absolute;
  left: 6px;
  top: 6px;
  bottom: 5px;
  width: 2px;
  background: repeating-linear-gradient(#27418a 0 2px, transparent 2px 4px);
}
.menu { display: flex; height: 24px; padding-left: 11px; }
.menu button { padding: 2px 7px 0 6px; height: 24px; }
.bar {
  height: 25px;
  display: flex;
  align-items: center;
  padding-right: 2px;
  margin-left: 2px;
  padding-left: 8px;
  border-bottom: 1px solid #3b619c;
  border-radius: 3px;
  background: linear-gradient(#dfebfe, #c3d8f9 50%, #84a9e3);
}
.bar.grip::before { left: 4px; }
.bar.coords { height: 27px; }
.bar.tall { height: 26px; }
.sep {
  width: 2px;
  height: 18px;
  margin: 0 2px;
  background: linear-gradient(90deg, #6a8ccb 50%, #f1f9ff 50%);
}
.tb { width: 22px; height: 22px; border: 1px solid transparent; }
.tb svg { width: 16px; height: 16px; }
.tb .big { width: 20px; height: 20px; }
.on { background: #ffc070; border: 1px solid #000080; }
.dim { font: italic bold 13px "Liberation Serif", serif; color: #000; }
.bold { font: bold 18px "Liberation Serif", serif; color: #000; }
.faint { fill: #6078a8; }
.t-a { font: 17px "Liberation Serif", serif; }
.t-serif { font: bold 13px "Liberation Serif", serif; }
.t-red { font: bold 9px "Liberation Sans", sans-serif; fill: #f00; }
.t-help { font: bold 15px "Liberation Sans", sans-serif; fill: #000080; }

.coords label { width: 15px; text-align: center; }
.coords .d { width: 24px; }
.coords .d1 { width: 16px; }
.coords input {
  width: 72px;
  height: 24px;
  margin: 0;
  padding: 0 3px 2px;
  border: 0;
  background: #fff;
  color: #111;
  font: 11px/16px "Open Sans", "Noto Sans", sans-serif;
}
.coords .wide { width: 83px; }
.coords .last { width: 79px; }
.lock { width: 21px; height: 22px; margin-left: 4px; }
.lock svg { width: 20px; height: 16px; }

.combo {
  height: 23px;
  display: flex;
  align-items: center;
  background: #fff;
}
.combo select {
  flex: 1;
  min-width: 0;
  height: 22px;
  margin: 0;
  padding: 0 4px;
  border: 0;
  appearance: none;
  background: none;
  color: #111;
  font: inherit;
}
.style, .layer { width: 230px; }
.type { width: 228px; }
.combo.type select { font-size: 11px; }
.style select { font: 16px/20px "Liberation Sans", Arial, sans-serif; padding-left: 10px; }
.layer select { font: 14px/20px "Liberation Sans", Arial, sans-serif; padding-left: 26px; }
.line { width: 82px; height: 2px; margin-left: 3px; }
.states { width: 98px; height: 20px; margin-left: 26px; }
.drop {
  width: 14px;
  height: 22px;
  margin-right: 1px;
  background: linear-gradient(#dfebfe, #92b5ea);
}

/* Work area */
.work { flex: 1; min-height: 0; display: flex; background: #9ebef5; }
.tools { width: 28px; flex: none; display: flex; flex-direction: column; gap: 2px; padding-top: 1px; }
.dock {
  width: 26px;
  margin-left: 1px;
  padding: 9px 1px 2px 0;
  border-right: 1px solid #3b619c;
  border-radius: 4px;
  background:
    repeating-linear-gradient(90deg, #27418a 0 2px, transparent 2px 4px) 4px 4px / 14px 2px no-repeat,
    linear-gradient(90deg, #dbe8fe, #bdd3f8 50%, #84a9e3);
}
.dock button { position: relative; width: 24px; height: 21px; }
.dock svg { width: 16px; height: 16px; }
.dock .on { background: #fee0b8; }
.dock .more::after {
  content: "";
  position: absolute;
  right: 0;
  bottom: 0;
  width: 6px;
  height: 6px;
  border: solid #222;
  border-width: 0 1px 1px 0;
  background: linear-gradient(135deg, transparent 40%, #ffee00 40%);
}
.dock .off::after { border-color: #fff; background: linear-gradient(135deg, transparent 45%, #000 45%); }
.dock .text-tool { font: bold 18px "Liberation Serif", serif; color: #0000f0; }
.dock .off-label { font: bold 8px "DejaVu Sans", sans-serif; color: #000080; }
.dock .snap svg { width: 24px; height: 20px; }
.snap text { font: bold 9px "DejaVu Sans", sans-serif; fill: #7088bc; }
.live text { fill: #000080; }

.mdi {
  flex: 1;
  min-width: 0;
  display: grid;
  grid-template: repeat(3, minmax(0, 1fr)) / minmax(0, 1fr) minmax(0, 2fr);
  grid-auto-flow: column;
  border-left: 2px solid #555;
  border-top: 2px solid #444;
  border-bottom: 1px solid #333;
}
.child {
  display: flex;
  flex-direction: column;
  padding: 0 8px 8px 7px;
  border-right: 2px solid #333;
  border-bottom: 2px solid #444;
  border-top: 1px solid #eef4fa;
  background: linear-gradient(#becddd, #d7e4f2 31px);
  border-radius: 5px 5px 0 0;
}
.child header {
  height: 30px;
  flex: none;
  display: flex;
  align-items: center;
  padding: 5px 0 0 2px;
}
.child h2 {
  flex: 1;
  padding: 3px 0 0 4px;
  color: #8f979f;
  font-family: "Noto Sans", "Open Sans", sans-serif;
}
.doc { width: 16px; height: 16px; }
.ctl { display: flex; gap: 2px; }
.ctl button {
  width: 32px;
  height: 18px;
  border: 1px solid #8796b0;
  border-radius: 2px;
}
.ctl svg { width: 12px; height: 12px; }
.view {
  flex: 1;
  min-height: 0;
  display: flex;
  align-items: flex-end;
  border: solid #6a6a6a;
  border-width: 2px 0 0 2px;
  background: #fff;
}
.axis { width: 30px; height: 30px; margin: 0 0 25px 19px; }
.side .axis { margin-bottom: 27px; }
.child.active {
  grid-area: 1 / 2 / 4 / 3;
  padding: 0 6px 9px 8px;
  border-right: 0;
  border-bottom: 1px solid #00b8d8;
  background: linear-gradient(#98b4d2, #b9d1ea 31px);
}
.active h2 { color: #000; }
.active .ctl { margin-right: 3px; }
.active .ctl button { border-color: #52688c; background: linear-gradient(#c4d6ea, #9cb8d8); }
.active .ctl .close { border-color: #5a1a20; background: linear-gradient(#e0a090, #c04030 50%, #d06850); }

.split {
  display: grid;
  grid-template: minmax(0, 1fr) 19px / minmax(0, 1fr) 20px;
  align-items: stretch;
}
.canvas { display: flex; align-items: flex-end; }
.axis3 { width: 90px; height: 90px; margin: 0 0 70px 69px; }
.axis3 text { font: 15px "Liberation Sans", Arial, sans-serif; }
.vscroll { display: flex; flex-direction: column; width: 17px; padding-bottom: 1px; }
.vscroll button {
  width: 17px;
  height: 19px;
  border-bottom: 2px solid #808080;
  border-top: 1px solid #fff;
  background: #f0f0f0;
  color: #111;
}
.vscroll svg { width: 14px; height: 14px; }
.vscroll .gray { color: #a0a0a0; }
.vscroll .edge, .hscroll .edge, .thumb {
  border: solid;
  border-width: 1px 2px 2px 1px;
  border-color: #e3e3e3 #696969 #696969 #e3e3e3;
  background: #f0f0f0;
}
.vscroll .edge { height: 17px; }
.vscroll .edge svg, .hscroll .edge svg { width: 8px; height: 8px; }
.track {
  flex: 1;
  display: grid;
  background: repeating-conic-gradient(#efefef 0 25%, #fff 0 50%) 0 0 / 2px 2px;
}
.vscroll .track { grid-template-rows: 1fr 1fr 1fr; }
.vscroll .thumb { grid-row: 2; }
.hscroll { display: flex; height: 17px; }
.hscroll .track { grid-template-columns: 1fr 1fr 1fr; }
.hscroll .thumb { grid-column: 2; }
.hscroll button {
  width: 20px;
  height: 17px;
  border: solid #808080;
  border-width: 1px 2px 0 0;
  background: #f0f0f0;
}
.hscroll svg { width: 14px; height: 14px; fill: none; stroke: #909090; }
.hscroll .edge { width: 17px; }
.hscroll .edge svg { fill: #000; stroke: none; }
.sizer { width: 17px; height: 17px; background: #f0f0f0; }

/* Side tabs */
.tabs {
  width: 23px;
  flex: none;
  display: flex;
  flex-direction: column;
  gap: 14px;
  padding: 2px 0 0 3px;
  background: #fbfbfb;
}
.tabs button {
  width: 21px;
  height: 56px;
  writing-mode: vertical-rl;
  border: 1px solid #a0a0a0;
  border-right: 0;
  border-radius: 4px 0 0 4px;
  background: #f4f4f4;
  color: #666;
  font: 12px/16px "Liberation Sans", Arial, sans-serif;
}
.tabs button + button { height: 74px; }

/* Annotation over the menu */
.callout {
  position: absolute;
  left: 220px;
  top: 14px;
  width: 180px;
  height: 160px;
  pointer-events: none;
}
.shade { filter: drop-shadow(2px 2px 2px rgba(0, 0, 0, 0.5)); }
```
